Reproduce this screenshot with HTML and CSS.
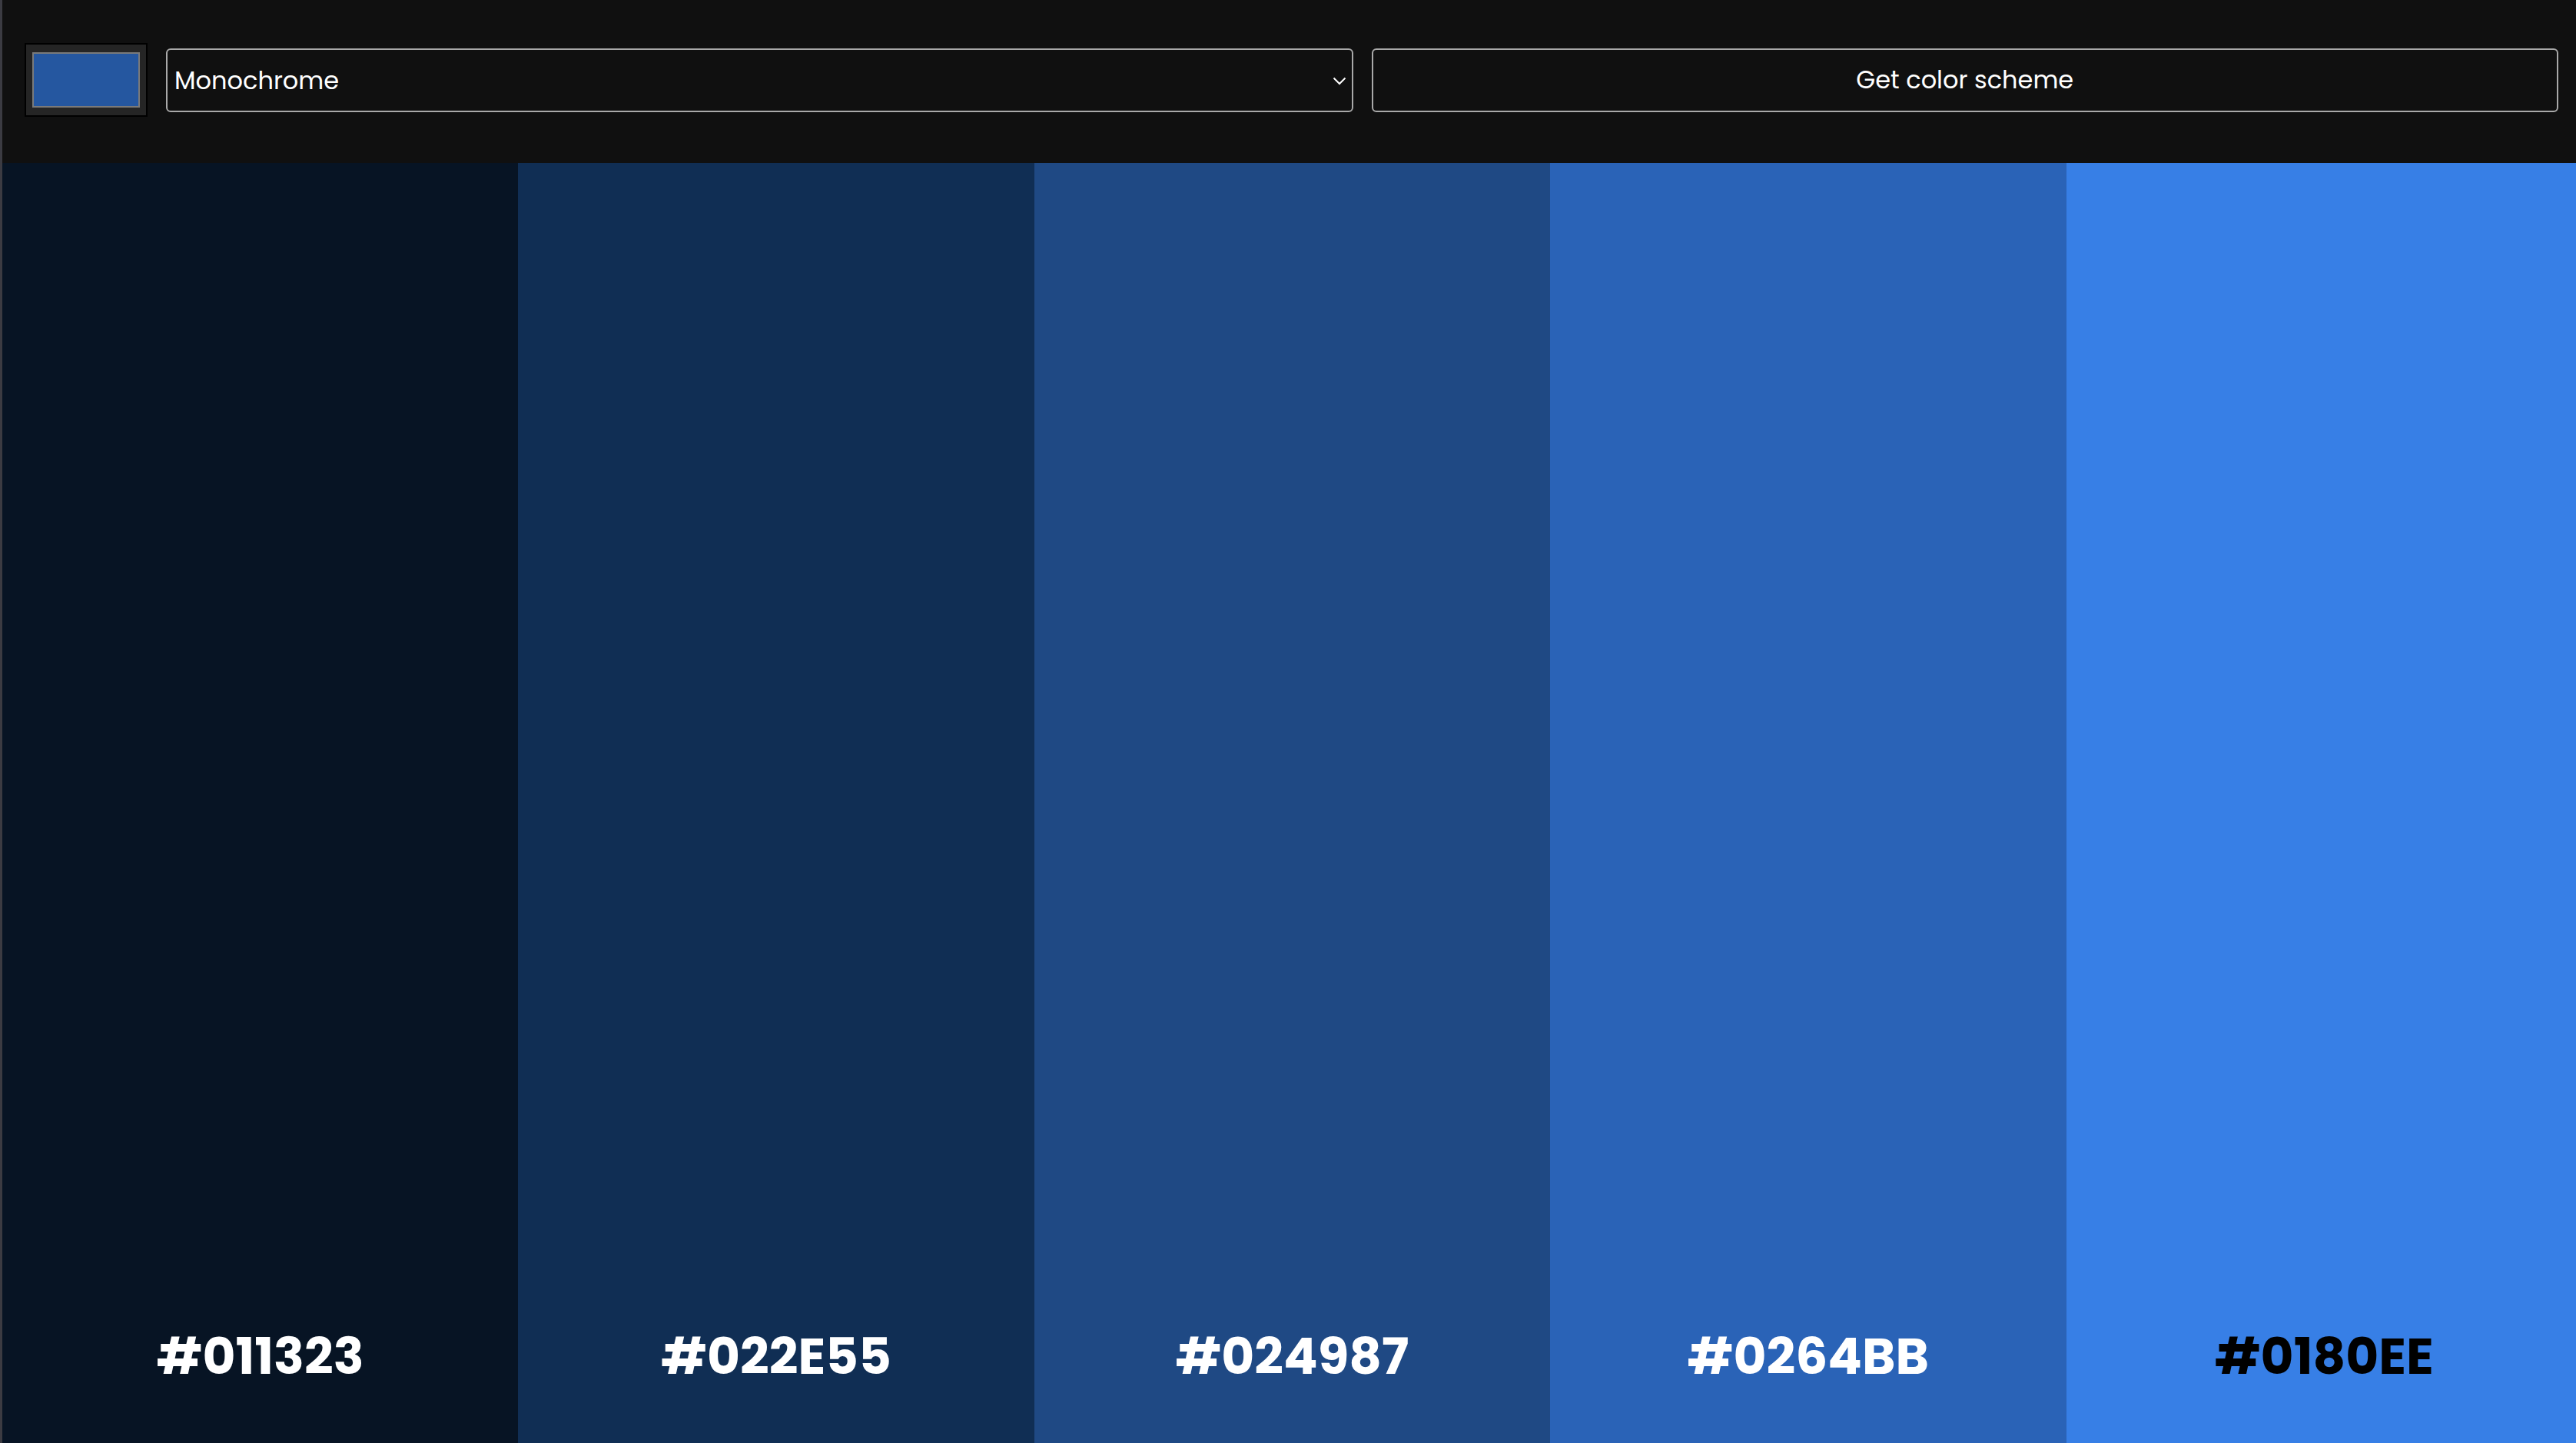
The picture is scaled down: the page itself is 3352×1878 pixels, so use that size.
FILE: index.html
```html
<!DOCTYPE html>
<html lang="en">
<head>
    <meta charset="UTF-8">
    <meta name="viewport" content="width=device-width, initial-scale=1.0">
    <title>Color Scheme Generator</title>
    <link rel="stylesheet" href="styles.css">
</head>
<body>
    <header class="controls">
        <input type="color" id="seed-color" class="seed-color" value="#2557a0">
        <div class="select-wrap">
            <select id="mode-select" class="mode-select">
                <option value="monochrome">Monochrome</option>
                <option value="monochrome-dark">Monochrome-dark</option>
                <option value="monochrome-light">Monochrome-light</option>
                <option value="analogic">Analogic</option>
                <option value="complement">Complement</option>
                <option value="analogic-complement">Analogic-complement</option>
                <option value="triad">Triad</option>
            </select>
            <svg class="chevron" width="18" height="11" viewBox="0 0 18 11">
                <path d="M1.5 1.5 L9 9 L16.5 1.5" fill="none" stroke="#fff" stroke-width="2"/>
            </svg>
        </div>
        <button id="get-scheme" class="get-scheme">Get color scheme</button>
    </header>

    <main class="scheme">
        <div class="swatch" style="background-color: #071424;"><span class="hex">#011323</span></div>
        <div class="swatch" style="background-color: #102e54;"><span class="hex">#022E55</span></div>
        <div class="swatch" style="background-color: #1f4984;"><span class="hex">#024987</span></div>
        <div class="swatch" style="background-color: #2a63b7;"><span class="hex">#0264BB</span></div>
        <div class="swatch" style="background-color: #377fe6;"><span class="hex dark">#0180EE</span></div>
    </main>
</body>
</html>
```

FILE: styles.css
```css
* {
    box-sizing: border-box;
}
body {
    margin: 0;
    height: 100vh;
    display: flex;
    flex-direction: column;
    font-family: 'Poppins', 'Lato', sans-serif;
    background-color: #101010;
    color: #fff;
    border-left: 3px solid #3b3b42;
    overflow: hidden;
}
.controls {
    height: 212px;
    flex-shrink: 0;
    display: grid;
    grid-template-columns: 160px 1fr 1fr;
    align-items: center;
    gap: 24px;
    padding: 0 23px 4px 29px;
    background-color: #101010;
}
.seed-color {
    -webkit-appearance: none;
    appearance: none;
    width: 160px;
    height: 96px;
    padding: 10px 8px;
    border: 2px solid #000;
    background-color: #252525;
    cursor: pointer;
}
.seed-color::-webkit-color-swatch-wrapper {
    padding: 0;
}
.seed-color::-webkit-color-swatch {
    border: 2px solid #7a7a7a;
    border-radius: 0;
}
.select-wrap {
    position: relative;
}
.mode-select {
    -webkit-appearance: none;
    appearance: none;
    width: 100%;
    height: 83px;
    padding: 0 40px 0 9px;
    border: 2px solid #a9a9a9;
    border-radius: 6px;
    background-color: #101010;
    color: #fff;
    font-family: inherit;
    font-size: 32px;
    outline: none;
}
.chevron {
    position: absolute;
    right: 9px;
    top: 37px;
    pointer-events: none;
}
.get-scheme {
    width: 100%;
    height: 83px;
    padding: 0;
    border: 2px solid #a9a9a9;
    border-radius: 6px;
    background-color: #101010;
    color: #fff;
    font-family: inherit;
    font-size: 32px;
    cursor: pointer;
}
.scheme {
    flex: 1;
    display: flex;
    margin-right: -8px;
}
.swatch {
    flex: 1;
    display: flex;
    align-items: flex-end;
    justify-content: center;
    padding-bottom: 80px;
}
.hex {
    font-size: 66px;
    font-weight: 700;
    line-height: 1;
    color: #fff;
}
.hex.dark {
    color: #000;
}
```
